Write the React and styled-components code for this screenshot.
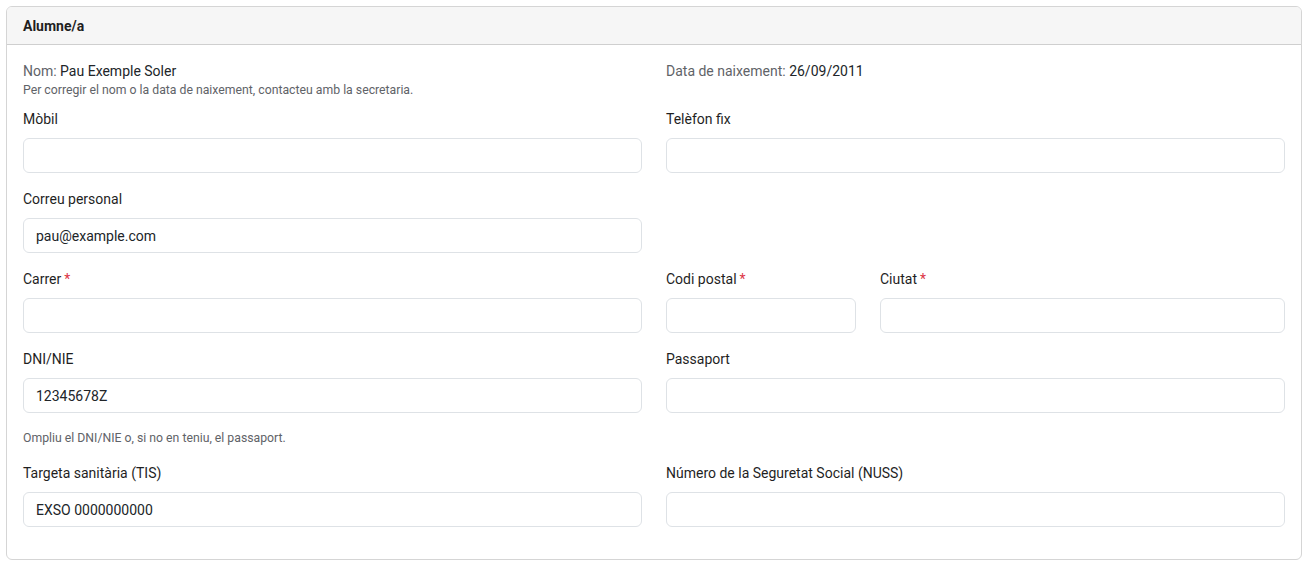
import React from "react";
import styled, { createGlobalStyle } from "styled-components";

const GlobalStyle = createGlobalStyle`
  body {
    margin: 0;
    padding: 6px;
    background: #fff;
    font-family: Roboto, "Liberation Sans", sans-serif;
    color: #212529;
  }
  * { box-sizing: border-box; }
`;

const Card = styled.section`
  border: 1px solid #d5d5d5;
  border-radius: 6px;
  overflow: hidden;
`;

const CardHeader = styled.header`
  height: 38px;
  padding: 0 16px;
  display: flex;
  align-items: center;
  background: #f6f6f6;
  border-bottom: 1px solid #cfcfcf;
  font-size: 14px;
  font-weight: 700;
  color: #1f1f1f;
`;

const CardBody = styled.div`
  padding: 16px 16px 32px;
`;

const Grid = styled.div`
  display: grid;
  grid-template-columns: 1fr 1fr;
  column-gap: 24px;
  row-gap: 16px;
`;

const SubGrid = styled.div`
  display: grid;
  grid-template-columns: 190px 1fr;
  column-gap: 24px;
`;

const InfoBlock = styled.div`
  font-size: 14px;
  line-height: 20px;
  margin-bottom: -6px;
`;

const Muted = styled.span`
  color: #5f6368;
`;

const Small = styled.div`
  font-size: 12.25px;
  line-height: 18px;
  color: #5f6368;
`;

const Help = styled(Small)`
  grid-column: 1 / -1;
`;

const Field = styled.div`
  display: flex;
  flex-direction: column;
`;

const Label = styled.label`
  font-size: 14px;
  line-height: 20px;
  margin-bottom: 9px;
  color: #1f1f1f;
`;

const Required = styled.span`
  color: #dc3545;
  margin-left: 3px;
`;

const Input = styled.input`
  height: 35px;
  width: 100%;
  padding: 0 12px;
  border: 1px solid #dee2e6;
  border-radius: 6px;
  font-family: inherit;
  font-size: 14px;
  color: #212529;
  background: #fff;
  outline: none;
`;

const TextField = ({ label, required, value }) => (
  <Field>
    <Label>
      {label}
      {required && <Required>*</Required>}
    </Label>
    <Input defaultValue={value || ""} />
  </Field>
);

const App = () => (
  <>
    <GlobalStyle />
    <Card>
      <CardHeader>Alumne/a</CardHeader>
      <CardBody>
        <Grid>
          <InfoBlock>
            <Muted>Nom:</Muted> Pau Exemple Soler
            <Small>Per corregir el nom o la data de naixement, contacteu amb la secretaria.</Small>
          </InfoBlock>
          <InfoBlock>
            <Muted>Data de naixement:</Muted> 26/09/2011
          </InfoBlock>

          <TextField label="Mòbil" />
          <TextField label="Telèfon fix" />

          <TextField label="Correu personal" value="pau@example.com" />
          <div />

          <TextField label="Carrer" required />
          <SubGrid>
            <TextField label="Codi postal" required />
            <TextField label="Ciutat" required />
          </SubGrid>

          <TextField label="DNI/NIE" value="12345678Z" />
          <TextField label="Passaport" />

          <Help>Ompliu el DNI/NIE o, si no en teniu, el passaport.</Help>

          <TextField label="Targeta sanitària (TIS)" value="EXSO 0000000000" />
          <TextField label="Número de la Seguretat Social (NUSS)" />
        </Grid>
      </CardBody>
    </Card>
  </>
);

export default App;
